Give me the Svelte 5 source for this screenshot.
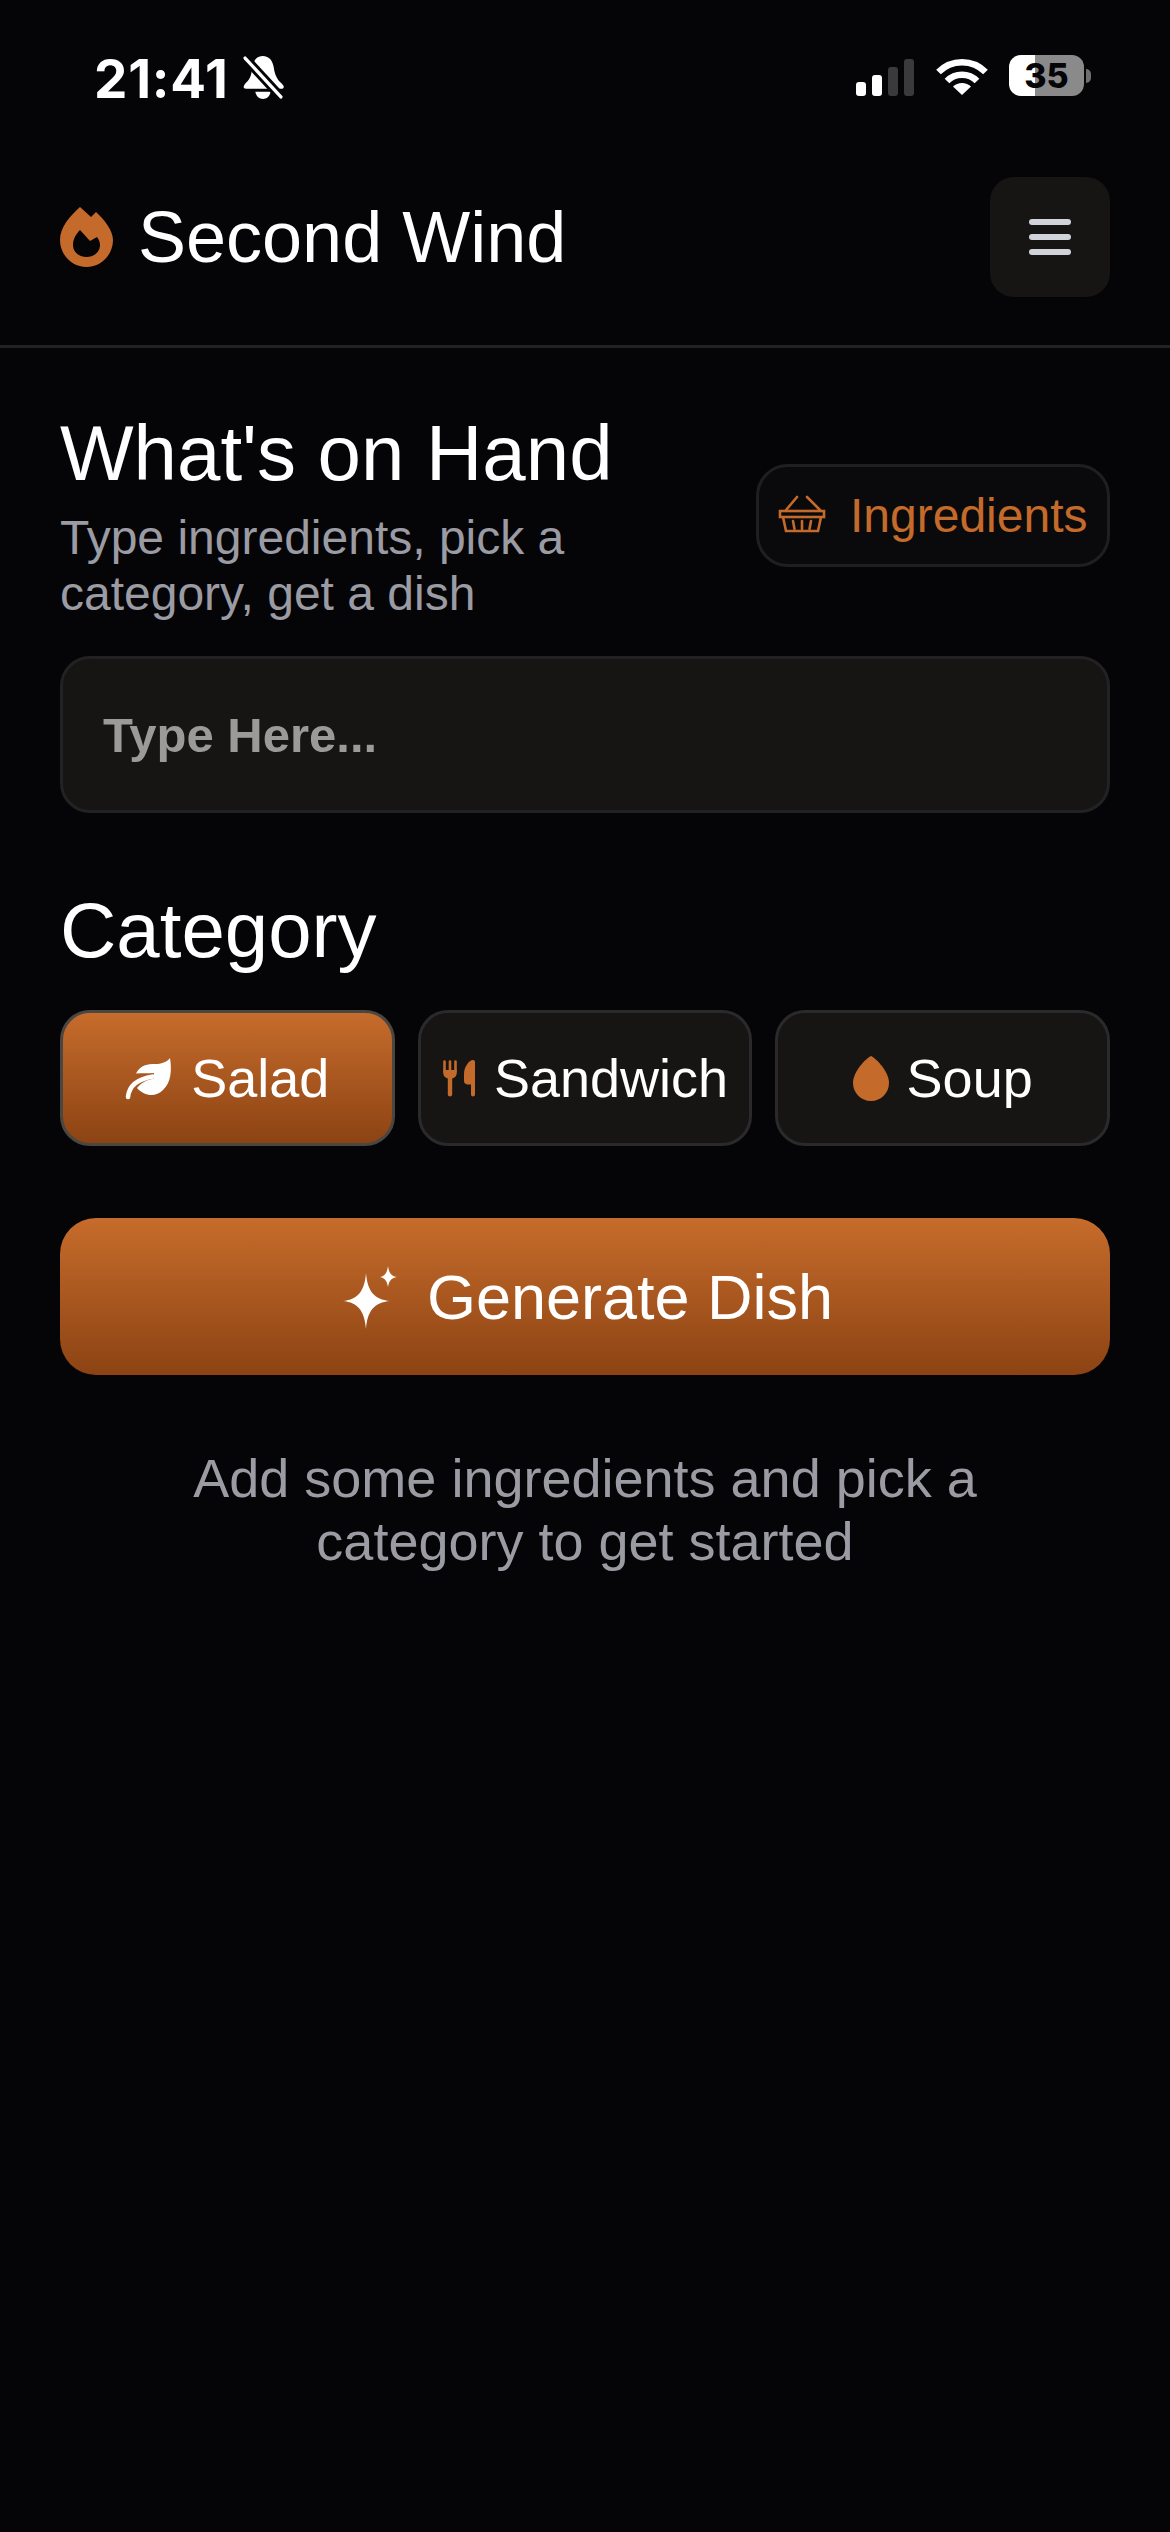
<script>
  const categories = [
    { id: "salad", label: "Salad" },
    { id: "sandwich", label: "Sandwich" },
    { id: "soup", label: "Soup" }
  ];

  let selected = $state("salad");
  let ingredients = $state("");
</script>

<div class="screen">
  <div class="status-bar">
    <div class="status-left">
      <span class="time">21:41</span>
      <svg class="bell" viewBox="0 0 40 44" width="41" height="45">
        <path fill="#fff" d="M19 1C26 1 29 6 30 12C31 20 34 25 38 28C41 31 40 33 37 33L3 33C0 33 0 31 2 28C6 25 8 21 8.5 15C9 8 12 1 19 1Z" />
        <path fill="#fff" d="M12 36H27C26 41 23 43 19.5 43C16 43 13 41 12 36Z" />
        <path stroke="#050508" stroke-width="9" d="M2 3L37 41" />
        <path stroke="#fff" stroke-width="3.2" stroke-linecap="round" d="M2 3L37 41" />
      </svg>
    </div>
    <div class="status-right">
      <div class="signal">
        <span class="bar on b1"></span>
        <span class="bar on b2"></span>
        <span class="bar b3"></span>
        <span class="bar b4"></span>
      </div>
      <svg class="wifi" viewBox="0 0 52 38" width="52" height="38">
        <path fill="none" stroke="#fff" stroke-width="6.5" d="M2.5 14A33 33 0 0 1 49.5 14" />
        <path fill="none" stroke="#fff" stroke-width="6.5" d="M11 23A21 21 0 0 1 41 23" />
        <path fill="#fff" d="M26 37L17 28.5A13 13 0 0 1 35 28.5Z" />
      </svg>
      <div class="battery">
        <div class="battery-body"><span>35</span></div>
        <div class="battery-nub"></div>
      </div>
    </div>
  </div>

  <header class="app-header">
    <div class="brand">
      <svg viewBox="0 0 53 60" width="53" height="60">
        <path fill="#c46a2a" fill-rule="evenodd" d="M20 0L31 10L36 5C45 13 53 24 53 33C53 48 41 60 26.5 60C12 60 0 48 0 33C0 20 10 9 20 0ZM20 23L30 34L37 30C39 33 40 35 40 38C40 45 34 50 26.5 50C19 50 13 45 13 38C13 32 16 27 20 23Z" />
      </svg>
      <h1>Second Wind</h1>
    </div>
    <button class="menu-btn" aria-label="Menu">
      <span></span><span></span><span></span>
    </button>
  </header>

  <main>
    <div class="hand-row">
      <div class="hand-text">
        <h2 class="hand-title">What's on Hand</h2>
        <p>Type ingredients, pick a category, get a dish</p>
      </div>
      <button class="ingredients-btn">
        <svg viewBox="0 0 64 56" width="64" height="56" fill="none" stroke="#c46a2a" stroke-width="2.6">
          <path d="M27 9L16 22M37 9L50 22" stroke-linecap="round" />
          <rect x="10" y="23" width="44" height="6" />
          <path d="M13 29L16 43H48L51 29" />
          <path d="M23 33L24.5 41M32 33V41M41 33L39.5 41" stroke-linecap="round" />
        </svg>
        Ingredients
      </button>
    </div>

    <input class="ingredient-input" placeholder="Type Here..." bind:value={ingredients} />

    <h2 class="category-title">Category</h2>
    <div class="category-row">
      {#each categories as cat (cat.id)}
        <button class="category-btn" class:active={selected === cat.id} onclick={() => (selected = cat.id)}>
          {#if cat.id === "salad"}
            <svg viewBox="10 6 48 44" width="48" height="44">
              <path fill="currentColor" d="M21 23.5C25 15 33 14 40 14C46 14 52 12 55 8C57 20 56 33 48 40C41 47 30 47 22 38C26 33 31 30 39 28.5L39 23C33 23.5 27 23 21 23.5Z" />
              <path fill="none" stroke="currentColor" stroke-width="4.6" stroke-linecap="round" d="M13 47C14 36 22 29 38 26.5" />
            </svg>
          {:else if cat.id === "sandwich"}
            <svg viewBox="12 10 34 38" width="34" height="38" fill="#c46a2a">
              <path stroke="#c46a2a" stroke-width="2.6" stroke-linecap="round" d="M14.5 12.5V22M20 12.5V22M25.5 12.5V22" />
              <path d="M13.2 21H26.8V24C26.8 27 24.5 29 22.2 29.5V45.5C22.2 48 17.8 48 17.8 45.5V29.5C15.5 29 13.2 27 13.2 24Z" />
              <path d="M45 13V45.5C45 48 41 48 41 45.5V35.5H38C35.5 35.5 34 34 34 32V25C34 18 39 11 43 11C44.5 11 45 12 45 13Z" />
            </svg>
          {:else}
            <svg viewBox="0 0 36 45" width="36" height="45">
              <path fill="#c46a2a" d="M18 0C20 0 36 14 36 27C36 37 28 45 18 45C8 45 0 37 0 27C0 14 16 0 18 0Z" />
            </svg>
          {/if}
          <span>{cat.label}</span>
        </button>
      {/each}
    </div>

    <button class="generate-btn">
      <svg viewBox="6 8 58 66" width="58" height="66">
        <path fill="#fff" d="M31 17C32.5 35 39 43.5 55 45C39 46.5 32.5 55 31 73C29.5 55 23 46.5 8 45C23 43.5 29.5 35 31 17Z" />
        <path fill="#fff" d="M53 10C54 17 56 20 62 21C56 22 54 25 53 31C52 25 50 22 45 21C50 20 52 17 53 10Z" />
      </svg>
      Generate Dish
    </button>

    <p class="hint">Add some ingredients and pick a<br />category to get started</p>
  </main>
</div>

<style>
  :global(body) {
    margin: 0;
    background: #050508;
  }

  .screen {
    width: 1170px;
    min-height: 2532px;
    background: #050508;
    color: #fff;
    font-family: "Liberation Sans", Arial, sans-serif;
  }

  .status-bar {
    height: 150px;
    box-sizing: border-box;
    padding: 36px 79px 0 94px;
    display: flex;
    justify-content: space-between;
    align-items: flex-start;
  }

  .status-left {
    display: flex;
    align-items: center;
    gap: 14px;
    margin-top: 19px;
  }

  .time {
    font-family: Inter, sans-serif;
    font-weight: 700;
    font-size: 53px;
    line-height: 42px;
    height: 42px;
    letter-spacing: 0.8px;
    padding-top: 2px;
  }

  .bell {
    display: block;
  }

  .status-right {
    display: flex;
    align-items: flex-start;
    padding-top: 21px;
  }

  .signal {
    display: flex;
    align-items: flex-end;
    gap: 6px;
    height: 37px;
    margin-top: 2px;
  }

  .bar {
    width: 10px;
    border-radius: 3px;
    background: #3a3a3a;
  }

  .bar.on {
    background: #fff;
  }

  .b1 { height: 14px; }
  .b2 { height: 21px; }
  .b3 { height: 29px; }
  .b4 { height: 37px; }

  .wifi {
    display: block;
    margin: 1px 0 0 22px;
  }

  .battery {
    display: flex;
    align-items: center;
    margin: -2px 0 0 21px;
  }

  .battery-body {
    width: 75px;
    height: 41px;
    border-radius: 12px;
    background: linear-gradient(to right, #fff 35%, #8a8a8a 35%);
    color: #050508;
    font-family: Inter, sans-serif;
    font-weight: 800;
    font-size: 34px;
    display: flex;
    align-items: center;
    justify-content: center;
  }

  .battery-nub {
    width: 5px;
    height: 14px;
    margin-left: 2px;
    border-radius: 0 7px 7px 0;
    background: #6e6e6e;
  }

  .app-header {
    padding: 27px 60px 48px;
    display: flex;
    align-items: center;
    justify-content: space-between;
    border-bottom: 3px solid #222225;
  }

  .brand {
    display: flex;
    align-items: center;
    gap: 25px;
  }

  .brand svg {
    display: block;
  }

  h1 {
    margin: 0;
    font-size: 72px;
    font-weight: 400;
    line-height: 84px;
  }

  .menu-btn {
    width: 120px;
    height: 120px;
    border: none;
    border-radius: 24px;
    background: #161513;
    padding: 0;
    display: flex;
    flex-direction: column;
    align-items: center;
    justify-content: center;
    gap: 9px;
  }

  .menu-btn span {
    width: 42px;
    height: 6px;
    border-radius: 3px;
    background: #d1d3da;
  }

  main {
    padding: 61px 60px 0;
  }

  .hand-row {
    display: flex;
    align-items: center;
    justify-content: space-between;
  }

  .hand-text {
    width: 600px;
  }

  h2 {
    margin: 0;
    font-weight: 400;
  }

  .hand-title {
    font-size: 78px;
    line-height: 88px;
  }

  .hand-text p {
    margin: 13px 0 0;
    width: 560px;
    font-size: 48px;
    line-height: 56px;
    color: #9b9ba3;
  }

  .ingredients-btn {
    box-sizing: border-box;
    width: 354px;
    height: 103px;
    border: 3px solid #1f1f22;
    border-radius: 32px;
    background: #0a0a0c;
    color: #c46a2a;
    font-family: inherit;
    font-size: 48px;
    padding: 0 0 0 11px;
    display: flex;
    align-items: center;
    gap: 16px;
  }

  .ingredients-btn svg {
    display: block;
  }

  .ingredient-input {
    display: block;
    box-sizing: border-box;
    width: 100%;
    height: 157px;
    margin-top: 34px;
    padding: 0 40px;
    border: 3px solid #222224;
    border-radius: 30px;
    background: #161513;
    color: #fff;
    font-family: inherit;
    font-size: 49px;
    font-weight: 700;
    outline: none;
  }

  .ingredient-input::placeholder {
    color: #9a9a98;
    opacity: 1;
  }

  .category-title {
    margin-top: 73px;
    font-size: 78px;
    line-height: 88px;
  }

  .category-row {
    display: grid;
    grid-template-columns: repeat(3, 1fr);
    gap: 23px;
    margin-top: 36px;
  }

  .category-btn {
    box-sizing: border-box;
    height: 136px;
    border: 3px solid #2a2a2d;
    border-radius: 30px;
    background: #161513;
    color: #fff;
    font-family: inherit;
    font-size: 54px;
    padding: 0;
    display: flex;
    align-items: center;
    justify-content: center;
    gap: 18px;
  }

  .category-btn.active {
    border-color: #4a4642;
    background: linear-gradient(to bottom, #c66c2c, #8c4313);
  }

  .category-btn svg {
    display: block;
  }

  .generate-btn {
    box-sizing: border-box;
    width: 100%;
    height: 157px;
    margin-top: 72px;
    border: none;
    border-radius: 36px;
    background: linear-gradient(to bottom, #c66c2c, #8c4313);
    color: #fff;
    font-family: inherit;
    font-size: 63px;
    padding: 0 0 0 4px;
    display: flex;
    align-items: center;
    justify-content: center;
    gap: 28px;
  }

  .generate-btn svg {
    display: block;
  }

  .hint {
    margin: 72px 0 0;
    text-align: center;
    font-size: 54px;
    line-height: 63px;
    color: #9b9ba3;
  }
</style>
